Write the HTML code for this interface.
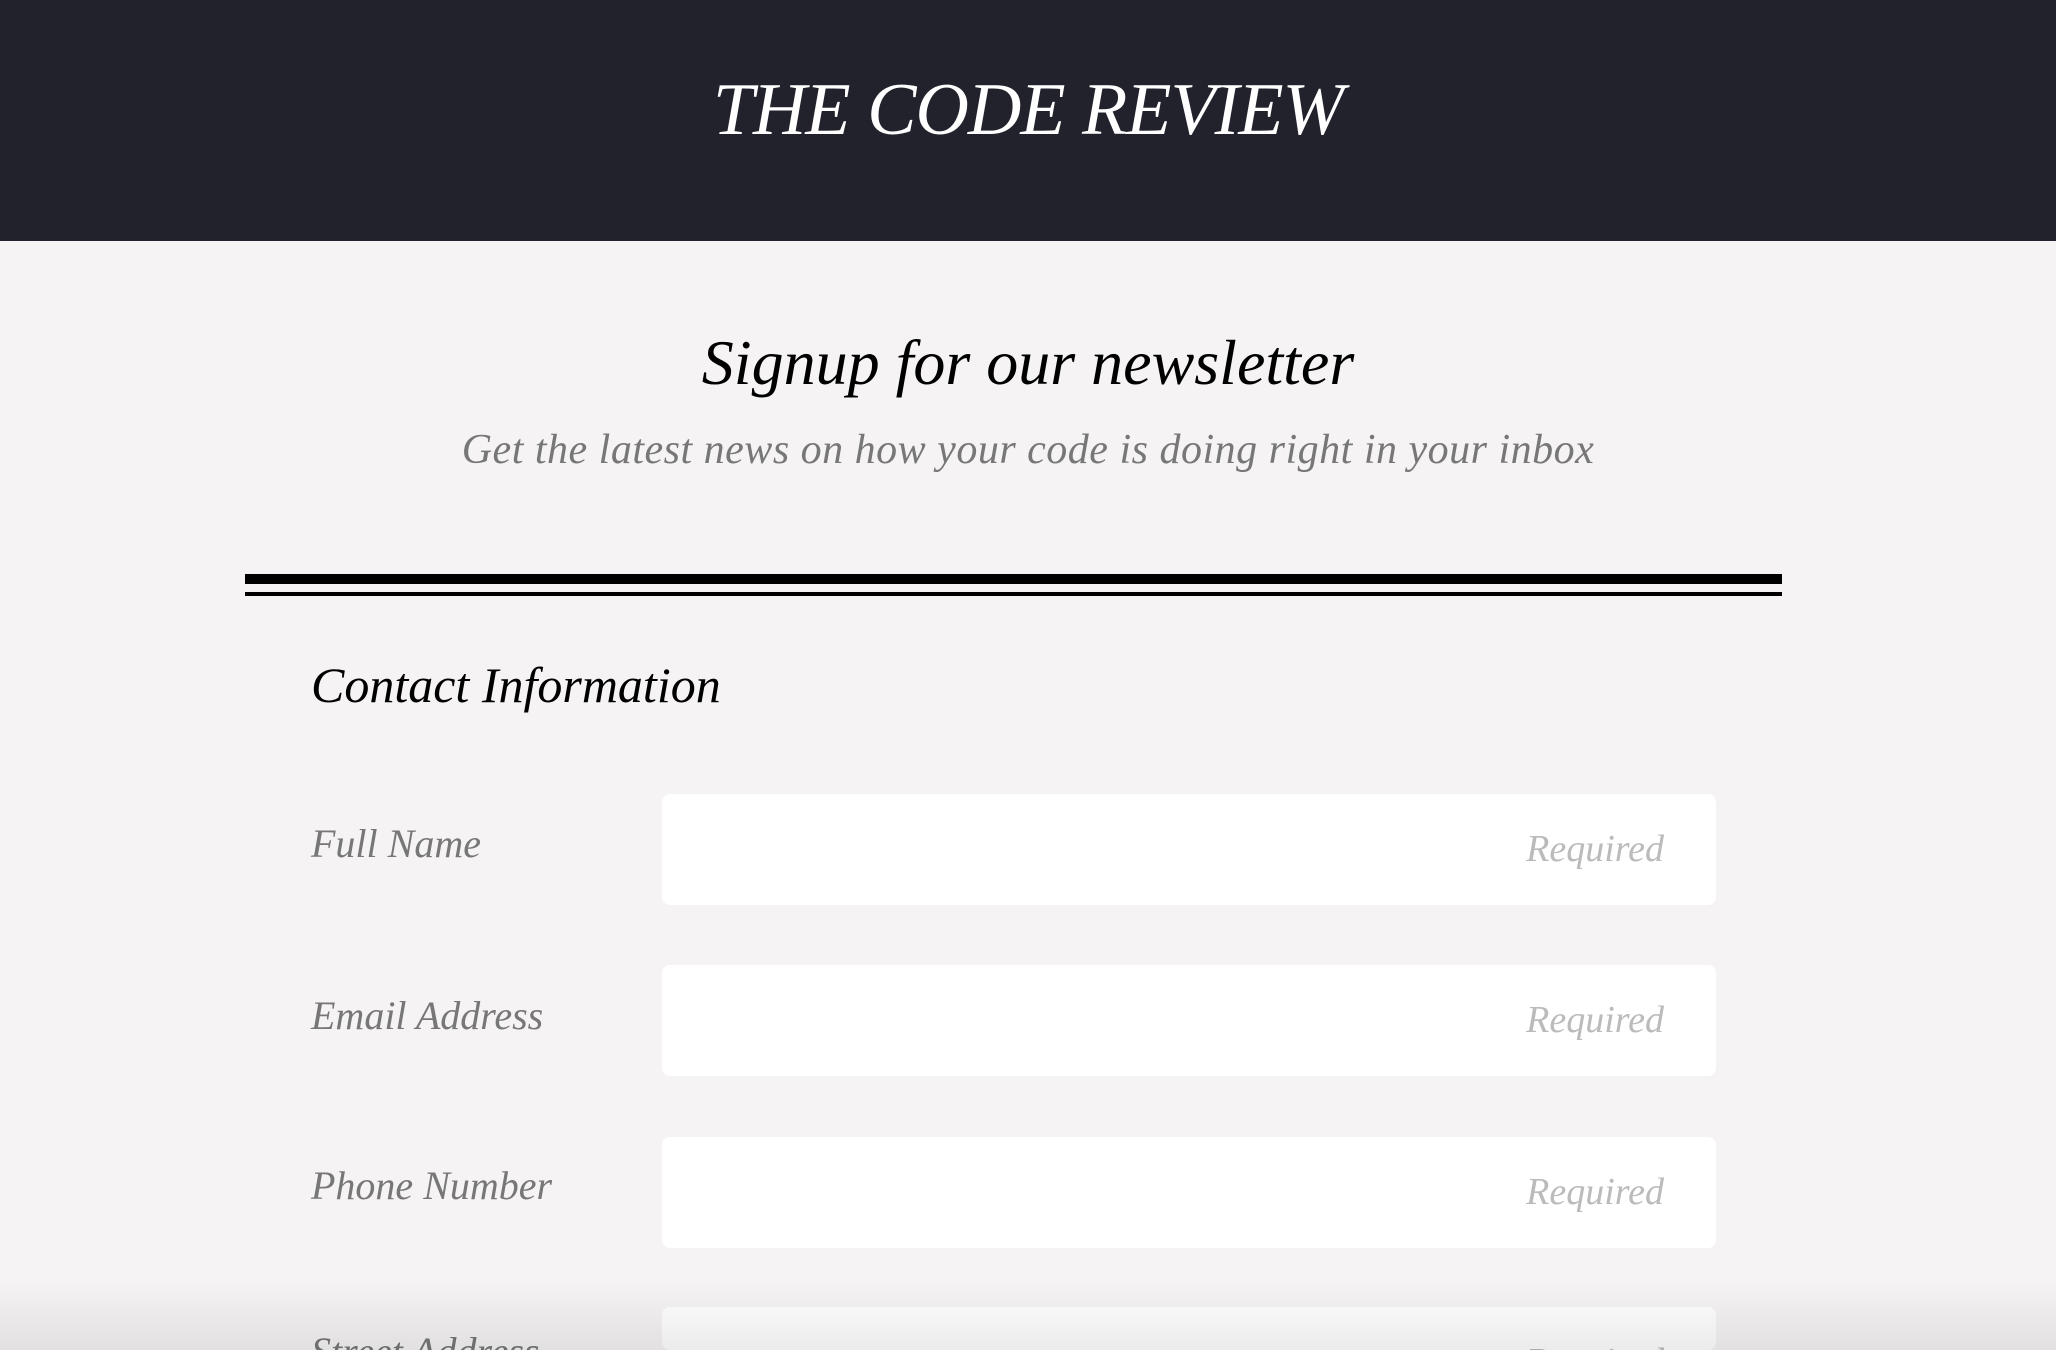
<!DOCTYPE html>
<html><head><meta charset="utf-8"><style>
*{margin:0;padding:0;box-sizing:border-box}
html{width:2056px;height:1350px;overflow:hidden}
body{width:2056px;height:1350px;overflow:hidden;background:#f5f3f4;font-family:"Liberation Serif",serif;font-style:italic;position:relative}
.hdr{position:absolute;left:0;top:0;width:2056px;height:241px;background:#22222d;color:#fff;text-align:center;font-size:74px;line-height:220px;letter-spacing:-1px}
.t{position:absolute;left:0;width:2056px;text-align:center}
.lbl{position:absolute;left:311px;font-size:40px;color:#777}
.in{position:absolute;left:662px;width:1054px;height:111px;background:#fff;border-radius:8px;text-align:right;padding-right:52px;font-size:38px;color:#bbb;line-height:111px}
.bar{position:absolute;left:245px;width:1537px;background:#000}
.fade{position:absolute;left:0;top:1280px;width:2056px;height:70px;background:linear-gradient(rgba(0,0,0,0),rgba(0,0,0,0.08))}
</style></head><body>
<div class="hdr">THE CODE REVIEW</div>
<div class="t" style="top:326px;font-size:64px;color:#000">Signup for our newsletter</div>
<div class="t" style="top:426px;font-size:42px;color:#777;letter-spacing:0.5px">Get the latest news on how your code is doing right in your inbox</div>
<div class="bar" style="top:574px;height:10px"></div>
<div class="bar" style="top:592px;height:4px"></div>
<div style="position:absolute;left:311px;top:656px;font-size:50px;color:#000">Contact Information</div>
<div class="lbl" style="top:820px">Full Name</div>
<div class="in" style="top:794px">Required</div>
<div class="lbl" style="top:992px">Email Address</div>
<div class="in" style="top:965px">Required</div>
<div class="lbl" style="top:1162px">Phone Number</div>
<div class="in" style="top:1137px">Required</div>
<div class="lbl" style="top:1328px">Street Address</div>
<div class="in" style="top:1307px;height:43px;line-height:111px;overflow:hidden">Required</div>
<div class="fade"></div>
</body></html>
